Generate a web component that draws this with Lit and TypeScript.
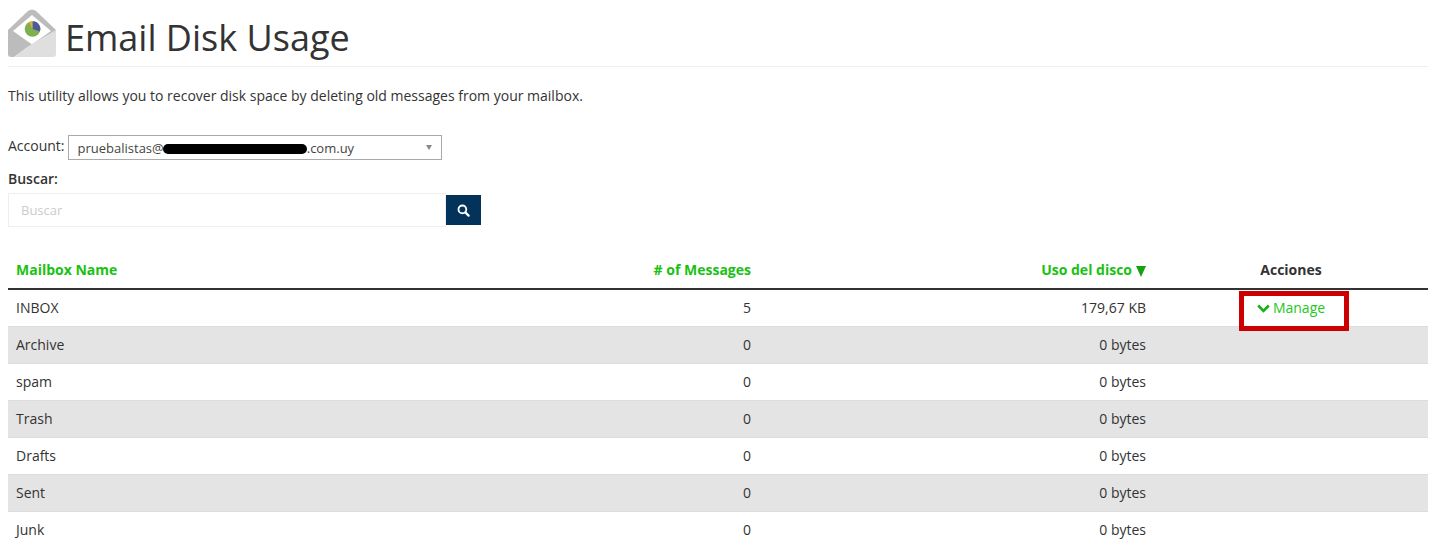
import { LitElement, html, css, svg } from "lit";
import { customElement } from "lit/decorators.js";

const rows: [string, string, string][] = [
  ["INBOX", "5", "179,67 KB"],
  ["Archive", "0", "0 bytes"],
  ["spam", "0", "0 bytes"],
  ["Trash", "0", "0 bytes"],
  ["Drafts", "0", "0 bytes"],
  ["Sent", "0", "0 bytes"],
  ["Junk", "0", "0 bytes"],
];

const logo = svg`<svg class="logo" viewBox="0 0 48 48" width="48" height="48">
  <path d="M0 21 L20 2 Q24 -1 28 2 L48 21 L48 26 L24 40 L0 26Z" fill="#bcbcbc"/>
  <path d="M5 22 L24 6 L43 22 L24 35.5Z" fill="#fff"/>
  <path d="M0 21 L23 35.5 L6 48 L3 48 Q0 48 0 45Z" fill="#bcbcbc"/>
  <path d="M23 35.5 L48 21 L48 45 Q48 48 45 48 L6 48Z" fill="#dfdfdf"/>
  <circle cx="24.5" cy="20" r="7.8" fill="#7fb04f"/>
  <path d="M24.5 20 L24.5 12.2 A7.8 7.8 0 0 1 32 22.4Z" fill="#4a5a9c"/>
  <path d="M24.5 20 L21 13 A7.8 7.8 0 0 1 24.5 12.2Z" fill="#eaa93f"/>
</svg>`;

@customElement("app-root")
export class AppRoot extends LitElement {
  static styles = css`
    :host {
      display: block;
      font-family: "Open Sans", sans-serif;
      font-size: 14px;
      color: #333;
      box-sizing: border-box;
      padding: 9px 6px 0 8px;
      height: 547px;
      overflow: hidden;
      position: relative;
    }
    .head {
      display: flex;
      align-items: center;
      gap: 9px;
      height: 57px;
      border-bottom: 1px solid #eee;
    }
    .logo { display: block; flex: none; margin-bottom: 9px; }
    h1 {
      margin: 1px 0 0;
      font-size: 36px;
      font-weight: 400;
      line-height: 44px;
    }
    .intro { margin: 19px 0 0; line-height: 20px; }
    .account {
      display: flex;
      align-items: center;
      gap: 3px;
      margin-top: 29px;
      height: 25px;
    }
    .account label { position: relative; top: -2px; }
    .select {
      position: relative;
      height: 23px;
      width: 363px;
      border: 1px solid #aaa;
      font-size: 13px;
      line-height: 24px;
      padding-left: 9px;
      color: #444;
      white-space: nowrap;
    }
    .select::after {
      content: "";
      position: absolute;
      right: 9px;
      top: 9px;
      border-left: 3.5px solid transparent;
      border-right: 3.5px solid transparent;
      border-top: 5px solid #888;
    }
    .redact {
      display: inline-block;
      width: 144px;
      height: 10px;
      margin-left: -1px;
      vertical-align: -1px;
      background: #000;
      border-radius: 5px;
    }
    .buscar-label { margin-top: 9px; font-weight: 600; line-height: 20px; }
    .search { display: flex; align-items: center; margin-top: 4px; }
    .search-input {
      width: 425px;
      height: 32px;
      border: 1px solid #eee;
      line-height: 32px;
      padding-left: 11px;
      color: #ccc;
      font-size: 13px;
      text-indent: 1px;
    }
    .search-btn {
      width: 35px;
      height: 30px;
      background: #03325a;
      display: flex;
      align-items: center;
      justify-content: center;
    }
    table {
      width: 100%;
      margin-top: 23px;
      border-collapse: collapse;
      table-layout: fixed;
    }
    .c1 { width: 496px; }
    .c2 { width: 255px; }
    .c3 { width: 395px; }
    .c4 { width: 274px; }
    th, td { padding: 0 8px; }
    th {
      height: 38px;
      font-weight: 700;
      font-size: 14px;
      color: #19c112;
      text-align: left;
      border-bottom: 2px solid #333;
    }
    th.dark { color: #333; text-align: center; }
    td {
      height: 36px;
      border-bottom: 1px solid #ddd;
      line-height: 20px;
    }
    .r { text-align: right; }
    th.r { text-align: right; }
    tr:nth-child(even) td { background: #e4e4e4; }
    .manage {
      display: flex;
      justify-content: center;
      align-items: center;
      gap: 3px;
      color: #22c722;
    }
    .tri {
      display: inline-block;
      border-left: 5.5px solid transparent;
      border-right: 5.5px solid transparent;
      border-top: 11px solid #19a010;
      margin-left: 4px;
      vertical-align: -2px;
    }
    .mark {
      position: absolute;
      left: 1239px;
      top: 291px;
      width: 110px;
      height: 40px;
      border: 5px solid #cc0000;
      box-sizing: border-box;
    }
  `;

  render() {
    return html`
      <div class="head">${logo}<h1>Email Disk Usage</h1></div>
      <p class="intro">This utility allows you to recover disk space by deleting old messages from your mailbox.</p>
      <div class="account">
        <label>Account:</label>
        <div class="select">pruebalistas@<span class="redact"></span>.com.uy</div>
      </div>
      <div class="buscar-label">Buscar:</div>
      <div class="search">
        <div class="search-input">Buscar</div>
        <div class="search-btn">
          <svg viewBox="0 0 14 14" width="13" height="13"><circle cx="5.8" cy="5.8" r="4.2" fill="none" stroke="#fff" stroke-width="2"/><path d="M9 9 L12.5 12.5" stroke="#fff" stroke-width="2.4" stroke-linecap="round"/></svg>
        </div>
      </div>
      <table>
        <colgroup>
          <col class="c1" /><col class="c2" /><col class="c3" /><col class="c4" />
        </colgroup>
        <thead>
          <tr>
            <th>Mailbox Name</th>
            <th class="r"># of Messages</th>
            <th class="r">Uso del disco<span class="tri"></span></th>
            <th class="dark">Acciones</th>
          </tr>
        </thead>
        <tbody>
          ${rows.map(
            (r, i) => html`<tr>
              <td>${r[0]}</td>
              <td class="r">${r[1]}</td>
              <td class="r">${r[2]}</td>
              <td>${i === 0
                ? html`<div class="manage">
                    <svg viewBox="0 0 13 9" width="13" height="9"><path d="M1.2 1.5 L6.5 6.8 L11.8 1.5" fill="none" stroke="#19b012" stroke-width="2.6"/></svg>
                    <span>Manage</span>
                  </div>`
                : ""}</td>
            </tr>`
          )}
        </tbody>
      </table>
      <div class="mark"></div>
    `;
  }
}
